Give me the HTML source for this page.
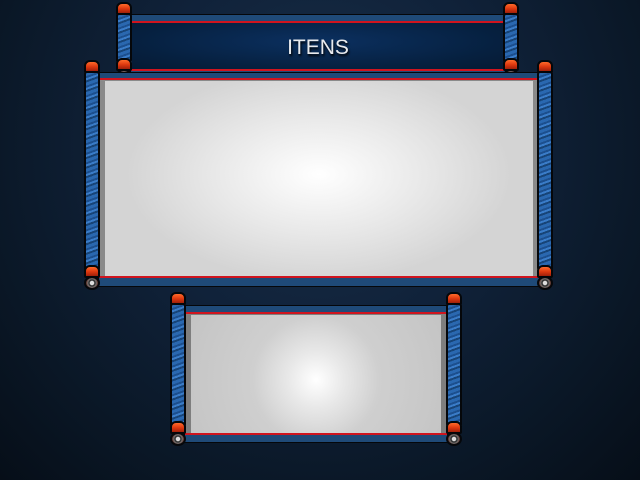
<!DOCTYPE html>
<html><head><meta charset="utf-8"><style>
*{margin:0;padding:0;box-sizing:border-box}
body{width:640px;height:480px;overflow:hidden;position:relative;
background:radial-gradient(ellipse at 50% 30%,#1a3048 0%,#10223a 40%,#0a1726 75%,#060e18 100%);font-family:"Liberation Sans",sans-serif}
.abs{position:absolute}
.panel{position:absolute;background:#000;}
.band{position:absolute;left:1px;right:1px;background:#1f4a78}
.red{position:absolute;left:1px;right:1px;height:2px;background:#d0141e}
.rod{position:absolute;width:16px;border:2px solid #05070a;border-radius:3px;
background:repeating-linear-gradient(160deg,#2a68b0 0 3px,#1c4f8e 3px 5px,#3a7cc8 5px 7px,#174477 7px 9px);}
.cap{position:absolute;width:16px;height:13px;border:2px solid #05070a;border-radius:6px 6px 2px 2px;
background:linear-gradient(#ff6a2a,#e03a10 50%,#a0200a)}
.knob{position:absolute;width:16px;height:14px;border:2px solid #05070a;border-radius:50%;
background:radial-gradient(circle,#ddd 0 2px,#333 2.5px 3.5px,#777 4px,#5a2a20 6px)}
</style></head><body>

<!-- top panel -->
<div class="panel" style="left:130px;top:14px;width:376px;height:64px;background:#05070a">
 <div class="band" style="top:1px;height:62px;background:#1f4a78"></div>
 <div class="abs" style="left:2px;right:2px;top:9px;height:46px;background:radial-gradient(ellipse at 50% 40%,#0b3060,#06203f 70%,#051a33)"></div>
 <div class="red" style="top:7px"></div>
 <div class="red" style="top:55px"></div>
 <div class="abs" style="left:0;right:0;top:22px;text-align:center;color:#e8eaee;font-size:21px;text-shadow:1px 2px 2px #000">ITENS</div>
</div>
<div class="cap" style="left:116px;top:2px"></div>
<div class="rod" style="left:116px;top:13px;height:50px"></div>
<div class="cap" style="left:116px;top:58px"></div>
<div class="knob" style="left:116px;top:69px"></div>
<div class="cap" style="left:503px;top:2px"></div>
<div class="rod" style="left:503px;top:13px;height:50px"></div>
<div class="cap" style="left:503px;top:58px"></div>
<div class="knob" style="left:503px;top:69px"></div>

<!-- main panel -->
<div class="panel" style="left:98px;top:72px;width:442px;height:215px;background:#05070a">
 <div class="band" style="top:1px;height:213px"></div>
 <div class="red" style="top:6px"></div>
 <div class="red" style="top:204px"></div>
 <div class="abs" style="left:2px;right:2px;top:8px;height:196px;background:#8a8a8a"></div>
 <div class="abs" style="left:7px;right:7px;top:9px;height:195px;background:radial-gradient(ellipse 45% 55% at 50% 48%,#ffffff 0%,#e8e8e8 55%,#d4d4d4 100%)"></div>
</div>
<div class="cap" style="left:84px;top:60px"></div>
<div class="rod" style="left:84px;top:71px;height:200px"></div>
<div class="cap" style="left:84px;top:265px"></div>
<div class="knob" style="left:84px;top:276px"></div>
<div class="cap" style="left:537px;top:60px"></div>
<div class="rod" style="left:537px;top:71px;height:200px"></div>
<div class="cap" style="left:537px;top:265px"></div>
<div class="knob" style="left:537px;top:276px"></div>

<!-- bottom panel -->
<div class="panel" style="left:184px;top:305px;width:264px;height:138px;background:#05070a">
 <div class="band" style="top:1px;height:136px"></div>
 <div class="red" style="top:7px"></div>
 <div class="red" style="top:128px"></div>
 <div class="abs" style="left:2px;right:2px;top:9px;height:119px;background:#7e7e7e"></div>
 <div class="abs" style="left:7px;right:7px;top:10px;height:118px;background:radial-gradient(circle at 50% 55%,#ffffff 0%,#e8e8e8 20%,#cfcfcf 45%,#c4c4c4 100%)"></div>
</div>
<div class="cap" style="left:170px;top:292px"></div>
<div class="rod" style="left:170px;top:303px;height:124px"></div>
<div class="cap" style="left:170px;top:421px"></div>
<div class="knob" style="left:170px;top:432px"></div>
<div class="cap" style="left:446px;top:292px"></div>
<div class="rod" style="left:446px;top:303px;height:124px"></div>
<div class="cap" style="left:446px;top:421px"></div>
<div class="knob" style="left:446px;top:432px"></div>

</body></html>
